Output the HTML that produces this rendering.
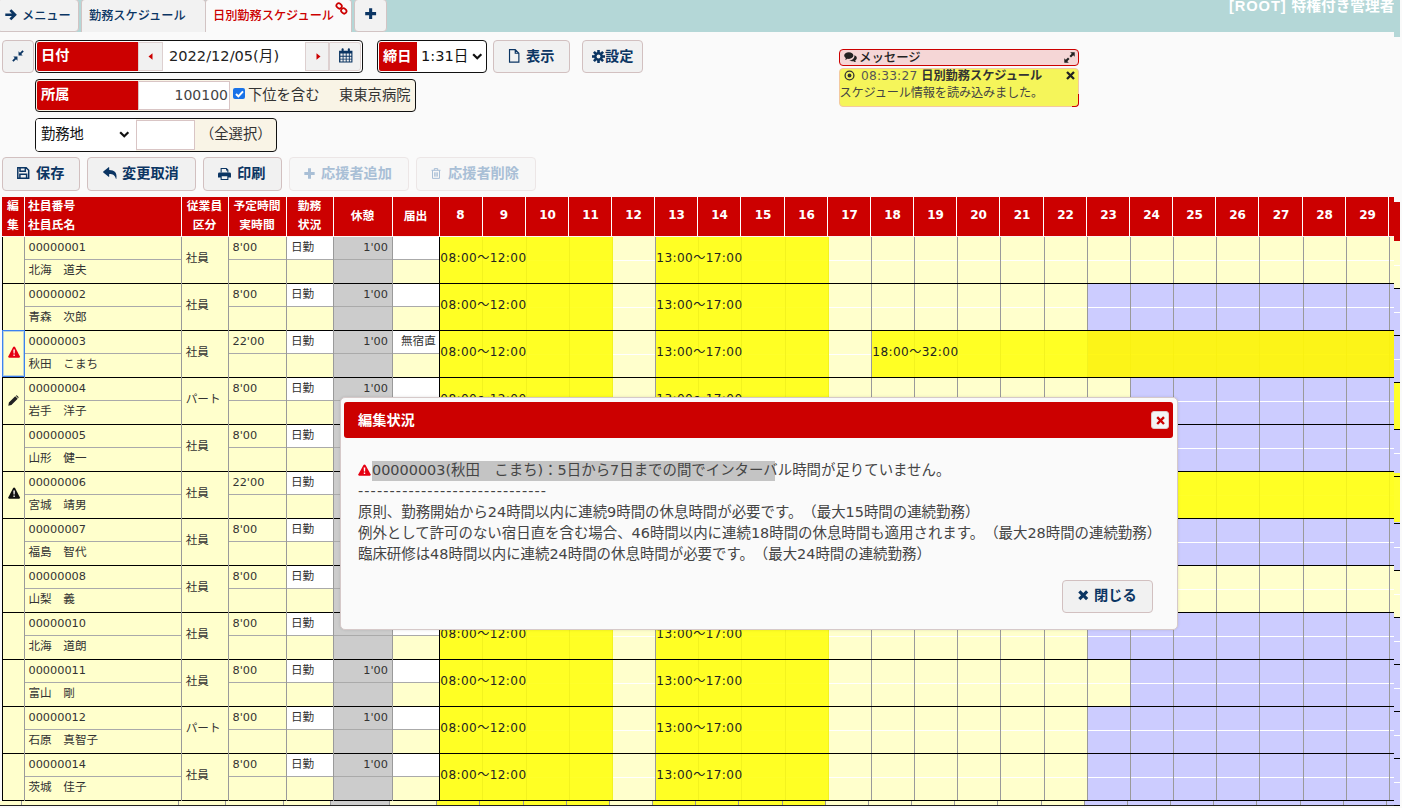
<!DOCTYPE html>
<html lang="ja"><head><meta charset="utf-8"><title>日別勤務スケジュール</title>
<style>
*{box-sizing:border-box;margin:0;padding:0}
html,body{width:1402px;height:808px;overflow:hidden;background:#fafafa}
body{position:relative;text-spacing-trim:space-all;font-family:"DejaVu Sans","Noto Sans CJK JP",sans-serif;font-size:12px;color:#333}
.a{position:absolute}
.t{position:absolute;white-space:nowrap;line-height:1}
.b{font-weight:bold}
.m{font-weight:500}
.nv{color:#0b3563}
.w{color:#fff}
svg{position:absolute;overflow:visible}
.btn{position:absolute;background:#f1f1f1;border:1px solid #d2c0c0;border-radius:4px}
.grp{position:absolute;border:1px solid #111;border-radius:4px;background:#fff}
.red{position:absolute;background:#cc0000}
.tab{position:absolute;top:-1px;height:32.5px;background:#f2f2f2;border:1px solid #d2c4c4;border-radius:4px}
</style></head>
<body>
<div class="a" style="left:0;top:0;width:1394px;height:32px;background:#b4d7d7"></div>
<div class="tab" style="left:-3px;width:82px"></div>
<svg class="a" style="left:5px;top:8.6px" width="11.5" height="11.5" viewBox="0 0 12 12" ><path d="M0.3 6H10M5.6 1.2L10.4 6L5.6 10.8" fill="none" stroke="#0b3563" stroke-width="2.8"/></svg>
<div class="t m nv" style="left:22px;top:10.3px;font-size:12.2px">メニュー</div>
<div class="tab" style="left:81px;width:125px;height:40px;border-bottom:none"></div>
<div class="t m nv" style="left:89px;top:10.3px;font-size:12.2px">勤務スケジュール</div>
<div class="tab" style="left:205px;width:147px;height:40px;background:#fafafa;border-bottom:none"></div>
<div class="a" style="left:204px;top:32px;width:150px;height:8px;background:#fafafa"></div>
<div class="t m" style="left:213px;top:10.3px;font-size:12.2px;color:#cc0000">日別勤務スケジュール</div>
<svg class="a" style="left:335px;top:2px" width="13" height="13" viewBox="0 0 13 13" ><g fill="none" stroke="#cc0000" stroke-width="1.7"><rect x="1.3" y="1.6" width="5.6" height="4.6" rx="2.2" transform="rotate(45 4.1 3.9)"/><rect x="6" y="6.6" width="5.6" height="4.6" rx="2.2" transform="rotate(45 8.8 8.9)"/></g></svg>
<div class="tab" style="left:354px;width:33px"></div>
<svg class="a" style="left:365px;top:8px" width="11.3" height="11.3" viewBox="0 0 11 11" ><path d="M5.5 0.2V10.8M0.2 5.5H10.8" stroke="#0b3563" stroke-width="3" fill="none"/></svg>
<div class="a" style="left:0;top:32px;width:82px;height:8px;background:#fafafa"></div>
<div class="a" style="left:352px;top:32px;width:1042px;height:8px;background:#fafafa"></div>
<div class="a" style="left:81px;top:32px;width:124px;height:8px;background:#fafafa"></div>
<div class="t b w" style="left:1229px;top:-1px;font-size:14.7px"><span style="font-family:Liberation Sans,sans-serif;letter-spacing:.9px">[ROOT] </span>特権付き管理者</div>
<div class="btn" style="left:2px;top:40px;width:32px;height:33px"></div>
<svg class="a" style="left:11.8px;top:50px" width="12" height="12" viewBox="0 0 11 11" ><g fill="#0b3563"><path d="M6 5V1.2L7.3 2.5L9.6 0.2L10.8 1.4L8.5 3.7L9.8 5Z"/><path d="M5 6V9.8L3.7 8.5L1.4 10.8L0.2 9.6L2.5 7.3L1.2 6Z"/></g></svg>
<div class="grp" style="left:35px;top:40px;width:328px;height:33px"></div>
<div class="red" style="left:37px;top:42px;width:101px;height:29px;border-radius:2px 0 0 2px"></div>
<div class="t b w" style="left:41px;top:48px;font-size:14.2px">日付</div>
<div class="a" style="left:138px;top:42px;width:25px;height:29px;background:#f1f1f1;border:1px solid #ddd0d0"></div>
<svg class="a" style="left:148px;top:53px" width="5" height="7" viewBox="0 0 5 7" ><path d="M4.5 0.3V6.7L0.5 3.5Z" fill="#cc0000"/></svg>
<div class="t" style="left:169px;top:49px;font-size:14.6px;color:#222">2022/12/05(月)</div>
<div class="a" style="left:305px;top:42px;width:24px;height:29px;background:#f1f1f1;border:1px solid #ddd0d0"></div>
<svg class="a" style="left:316px;top:53px" width="5" height="7" viewBox="0 0 5 7" ><path d="M0.5 0.3V6.7L4.5 3.5Z" fill="#cc0000"/></svg>
<div class="a" style="left:329px;top:42px;width:32px;height:29px;background:#f1f1f1;border:1px solid #ddd0d0;border-radius:0 3px 3px 0"></div>
<svg class="a" style="left:339px;top:48px" width="13.5" height="14.5" viewBox="0 0 12 13" ><g fill="#0b3563"><path d="M0 2.5H12V13H0ZM1.2 5V7H3.2V5ZM4 5V7H6V5ZM6.8 5V7H8.8V5ZM9.6 5V7H11V5ZM1.2 7.8V9.6H3.2V7.8ZM4 7.8V9.6H6V7.8ZM6.8 7.8V9.6H8.8V7.8ZM9.6 7.8V9.6H11V7.8ZM1.2 10.4V12H3.2V10.4ZM4 10.4V12H6V10.4ZM6.8 10.4V12H8.8V10.4ZM9.6 10.4V12H11V10.4Z" fill-rule="evenodd"/><rect x="2.3" y="0.3" width="1.8" height="3.4" rx="0.8"/><rect x="7.9" y="0.3" width="1.8" height="3.4" rx="0.8"/></g></svg>
<div class="grp" style="left:377px;top:40px;width:110px;height:33px"></div>
<div class="red" style="left:379px;top:42px;width:38px;height:29px;border-radius:2px 0 0 2px"></div>
<div class="t b w" style="left:383px;top:49px;font-size:14.2px">締日</div>
<div class="t" style="left:421px;top:49px;font-size:14.6px;color:#111">1:31日</div>
<svg class="a" style="left:472px;top:53px" width="10.5" height="7" viewBox="0 0 9 6" ><path d="M1 1L4.5 4.5L8 1" fill="none" stroke="#111" stroke-width="1.9"/></svg>
<div class="btn" style="left:493px;top:40px;width:77px;height:33px"></div>
<svg class="a" style="left:507.8px;top:49.2px" width="12.4" height="13.8" viewBox="0 0 10 13" ><path d="M0.6 0.6H6L9.4 4V12.4H0.6ZM6 0.6V4H9.4" fill="none" stroke="#0b3563" stroke-width="1.1"/></svg>
<div class="t b nv" style="left:526px;top:49px;font-size:14.2px">表示</div>
<div class="btn" style="left:582px;top:40px;width:61px;height:33px"></div>
<svg class="a" style="left:592px;top:50px" width="13" height="13" viewBox="0 0 13 13" ><g transform="translate(6.5 6.5)" fill="#0b3563"><circle r="4.4"/><rect x="-1.3" y="-6.5" width="2.6" height="13" transform="rotate(0)"/><rect x="-1.3" y="-6.5" width="2.6" height="13" transform="rotate(45)"/><rect x="-1.3" y="-6.5" width="2.6" height="13" transform="rotate(90)"/><rect x="-1.3" y="-6.5" width="2.6" height="13" transform="rotate(135)"/><circle r="1.9" fill="#f1f1f1"/></g></svg>
<div class="t b nv" style="left:605px;top:49px;font-size:14.2px">設定</div>
<div class="grp" style="left:35px;top:79px;width:381px;height:33px;background:#f9f4e6"></div>
<div class="red" style="left:37px;top:81px;width:101px;height:29px;border-radius:2px 0 0 2px"></div>
<div class="t b w" style="left:41px;top:87px;font-size:14.2px">所属</div>
<div class="a" style="left:138px;top:81px;width:92px;height:29px;background:#fff;border:1px solid #d9c5c5"></div>
<div class="t" style="left:130px;width:98px;text-align:right;top:87.5px;font-size:14px;color:#444">100100</div>
<div class="a" style="left:233px;top:87.6px;width:11.5px;height:11.5px;background:#1a73e8;border-radius:2px"></div>
<svg class="a" style="left:234.5px;top:89.5px" width="9" height="8" viewBox="0 0 9 8" ><path d="M1 4L3.4 6.4L8 1.3" fill="none" stroke="#fff" stroke-width="2"/></svg>
<div class="t" style="left:248px;top:88px;font-size:14.3px;color:#333">下位を含む</div>
<div class="t" style="left:339px;top:88px;font-size:14.3px;color:#333">東東京病院</div>
<div class="grp" style="left:35px;top:118px;width:242px;height:34px;background:#f9f4e6"></div>
<div class="a" style="left:36px;top:119px;width:100px;height:32px;background:#fff;border-radius:3px 0 0 3px"></div>
<div class="t" style="left:41px;top:127.3px;font-size:14.3px;color:#111">勤務地</div>
<svg class="a" style="left:119px;top:131px" width="10.5" height="7" viewBox="0 0 9 6" ><path d="M1 1L4.5 4.5L8 1" fill="none" stroke="#111" stroke-width="1.9"/></svg>
<div class="a" style="left:136px;top:120px;width:59px;height:30px;background:#fff;border:1px solid #d9c5c5"></div>
<div class="t" style="left:200px;top:127px;font-size:14.3px;color:#333">（全選択）</div>
<div class="btn" style="left:2px;top:157px;width:78px;height:34px;"></div>
<div class="t b" style="left:36px;top:166.2px;font-size:14.2px;color:#0b3563">保存</div>
<svg class="a" style="left:17px;top:167px" width="12.5" height="12" viewBox="0 0 12.5 12" ><path d="M0.8 0.8H9.2L11.7 3.3V11.2H0.8ZM3 0.8V4.2H8.3V0.8M2.9 11.2V7.2H9.6V11.2" fill="none" stroke="#0b3563" stroke-width="1.5"/></svg>
<div class="btn" style="left:87px;top:157px;width:109px;height:34px;"></div>
<div class="t b" style="left:122px;top:166.2px;font-size:14.2px;color:#0b3563">変更取消</div>
<svg class="a" style="left:103px;top:166.5px" width="14" height="12.5" viewBox="0 0 14 12.5" ><path d="M5.6 0.2Q6.2 -0.2 6.2 0.7V2.9C11.5 2.9 14.2 5.6 13.4 11.6Q13.2 12.6 12.8 11.6C12 8.2 10 7 6.2 7V9.3Q6.2 10.2 5.6 9.8L0.3 5.4Q-0.1 5 0.3 4.6Z" fill="#0b3563"/></svg>
<div class="btn" style="left:203px;top:157px;width:79px;height:34px;"></div>
<div class="t b" style="left:237px;top:166.2px;font-size:14.2px;color:#0b3563">印刷</div>
<svg class="a" style="left:218px;top:168px" width="13" height="12" viewBox="0 0 13 12" ><g fill="#0b3563"><path d="M2.6 0H8.6L10.4 1.8V4.6H9.3V2.4H8V1.1H3.7V4.6H2.6Z"/><path d="M1.4 4.6H11.6Q13 4.6 13 6V9.4H10.4V12H2.6V9.4H0V6Q0 4.6 1.4 4.6ZM3.7 8.2V10.9H9.3V8.2Z" fill-rule="evenodd"/></g></svg>
<div class="btn" style="left:289px;top:157px;width:120px;height:34px;background:#f7f7f7;border-color:#ece6e6;"></div>
<div class="t b" style="left:321px;top:166.2px;font-size:14.2px;color:#a9bfd6">応援者追加</div>
<svg class="a" style="left:304px;top:167.5px" width="11" height="11" viewBox="0 0 10 10" ><path d="M5 0.3V9.7M0.3 5H9.7" stroke="#a9bfd6" stroke-width="2.7" fill="none"/></svg>
<div class="btn" style="left:416px;top:157px;width:120px;height:34px;background:#f7f7f7;border-color:#ece6e6;"></div>
<div class="t b" style="left:448px;top:166.2px;font-size:14.2px;color:#a9bfd6">応援者削除</div>
<svg class="a" style="left:431px;top:168px" width="10" height="11" viewBox="0 0 10 11" ><path d="M0.5 2.3H9.5M3.3 2.3V0.6H6.7V2.3M1.5 2.3V10.4H8.5V2.3M3.7 4.3V8.6M5 4.3V8.6M6.3 4.3V8.6" fill="none" stroke="#a9bfd6" stroke-width="1"/></svg>
<div class="a" style="left:839px;top:49px;width:240px;height:17px;background:#f5d6d6;border:1px solid #cc0000;border-radius:4px"></div>
<svg class="a" style="left:844px;top:52px" width="13" height="11" viewBox="0 0 13 11"><g fill="#222"><path d="M4.8 0.3C7.4 0.3 9.4 1.7 9.4 3.6C9.4 5.5 7.4 6.9 4.8 6.9C4.3 6.9 3.9 6.85 3.5 6.75C2.8 7.4 1.8 7.7 0.9 7.7C1.5 7.2 1.8 6.6 1.8 6C0.8 5.4 0.2 4.55 0.2 3.6C0.2 1.7 2.2 0.3 4.8 0.3Z"/><path d="M10.3 3.3C11.8 3.8 12.8 4.8 12.8 6C12.8 6.95 12.2 7.8 11.2 8.4C11.2 9 11.5 9.6 12.1 10.1C11.2 10.1 10.2 9.8 9.5 9.15C9.1 9.25 8.7 9.3 8.2 9.3C7 9.3 5.9 9 5.1 8.5C7.9 8.4 10.4 6.6 10.4 3.9C10.4 3.7 10.35 3.5 10.3 3.3Z"/></g></svg>
<div class="t" style="left:859px;top:51.5px;font-size:12.4px;font-weight:500;color:#222">メッセージ</div>
<svg class="a" style="left:1064px;top:52px" width="11" height="11" viewBox="0 0 11 11"><g fill="#222"><path d="M6.2 0.3H10.7V4.8L9.2 3.3L7 5.5L5.5 4L7.7 1.8Z"/><path d="M4.8 10.7H0.3V6.2L1.8 7.7L4 5.5L5.5 7L3.3 9.2Z"/></g></svg>
<div class="a" style="left:839px;top:68px;width:240px;height:39px;background:#f5f55a;border:1px solid #f3c9a0;border-radius:4px"></div>
<div class="a" style="left:1072px;top:94px;width:7px;height:13px;border-right:1.5px solid #cc0000;border-bottom:1.5px solid #cc0000;border-radius:0 0 4px 0"></div>
<svg class="a" style="left:844px;top:70px" width="11" height="11" viewBox="0 0 11 11"><circle cx="5.5" cy="5.5" r="4.4" fill="none" stroke="#333" stroke-width="1.3"/><circle cx="5.5" cy="5.5" r="1.9" fill="#333"/></svg>
<div class="t" style="left:861px;top:70px;font-size:12.2px;color:#555"><span style="letter-spacing:.2px">08:33:27</span> <span class="b" style="color:#333">日別勤務スケジュール</span></div>
<svg class="a" style="left:1066px;top:71px" width="9" height="9" viewBox="0 0 9 9"><path d="M1 1L8 8M8 1L1 8" stroke="#222" stroke-width="2.3" fill="none"/></svg>
<div class="t" style="left:839.5px;top:87px;font-size:12.2px;letter-spacing:-.16px;color:#444">スケジュール情報を読み込みました。</div>
<div class="red" style="left:2px;top:197px;width:1392px;height:39px"></div>
<div class="a" style="left:2px;top:236px;width:1392px;height:1px;background:#fff3f3"></div>
<div class="a" style="left:24px;top:197px;width:1px;height:39px;background:#fff"></div>
<div class="a" style="left:181px;top:197px;width:1px;height:39px;background:#fff"></div>
<div class="a" style="left:228px;top:197px;width:1px;height:39px;background:#fff"></div>
<div class="a" style="left:286px;top:197px;width:1px;height:39px;background:#fff"></div>
<div class="a" style="left:333px;top:197px;width:1px;height:39px;background:#fff"></div>
<div class="a" style="left:392px;top:197px;width:1px;height:39px;background:#fff"></div>
<div class="a" style="left:439px;top:197px;width:1px;height:39px;background:#fff"></div>
<div class="a" style="left:482px;top:197px;width:1px;height:39px;background:#fff"></div>
<div class="a" style="left:525px;top:197px;width:1px;height:39px;background:#fff"></div>
<div class="a" style="left:568px;top:197px;width:1px;height:39px;background:#fff"></div>
<div class="a" style="left:611px;top:197px;width:1px;height:39px;background:#fff"></div>
<div class="a" style="left:654px;top:197px;width:1px;height:39px;background:#fff"></div>
<div class="a" style="left:697px;top:197px;width:1px;height:39px;background:#fff"></div>
<div class="a" style="left:740px;top:197px;width:1px;height:39px;background:#fff"></div>
<div class="a" style="left:784px;top:197px;width:1px;height:39px;background:#fff"></div>
<div class="a" style="left:827px;top:197px;width:1px;height:39px;background:#fff"></div>
<div class="a" style="left:870px;top:197px;width:1px;height:39px;background:#fff"></div>
<div class="a" style="left:913px;top:197px;width:1px;height:39px;background:#fff"></div>
<div class="a" style="left:956px;top:197px;width:1px;height:39px;background:#fff"></div>
<div class="a" style="left:999px;top:197px;width:1px;height:39px;background:#fff"></div>
<div class="a" style="left:1043px;top:197px;width:1px;height:39px;background:#fff"></div>
<div class="a" style="left:1086px;top:197px;width:1px;height:39px;background:#fff"></div>
<div class="a" style="left:1129px;top:197px;width:1px;height:39px;background:#fff"></div>
<div class="a" style="left:1172px;top:197px;width:1px;height:39px;background:#fff"></div>
<div class="a" style="left:1215px;top:197px;width:1px;height:39px;background:#fff"></div>
<div class="a" style="left:1258px;top:197px;width:1px;height:39px;background:#fff"></div>
<div class="a" style="left:1302px;top:197px;width:1px;height:39px;background:#fff"></div>
<div class="a" style="left:1345px;top:197px;width:1px;height:39px;background:#fff"></div>
<div class="a" style="left:1388px;top:197px;width:1px;height:39px;background:#fff"></div>
<div class="t b w" style="left:7px;top:201.2px;font-size:11.8px;">編</div>
<div class="t b w" style="left:7px;top:220.2px;font-size:11.8px;">集</div>
<div class="t b w" style="left:28px;top:201.2px;font-size:11.8px;">社員番号</div>
<div class="t b w" style="left:28px;top:220.2px;font-size:11.8px;">社員氏名</div>
<div class="t b w" style="left:164.5px;width:80px;text-align:center;top:201.2px;font-size:11.8px;">従業員</div>
<div class="t b w" style="left:164.5px;width:80px;text-align:center;top:220.2px;font-size:11.8px;">区分</div>
<div class="t b w" style="left:217px;width:80px;text-align:center;top:201.2px;font-size:11.8px;">予定時間</div>
<div class="t b w" style="left:217px;width:80px;text-align:center;top:220.2px;font-size:11.8px;">実時間</div>
<div class="t b w" style="left:269.5px;width:80px;text-align:center;top:201.2px;font-size:11.8px;">勤務</div>
<div class="t b w" style="left:269.5px;width:80px;text-align:center;top:220.2px;font-size:11.8px;">状況</div>
<div class="t b w" style="left:322.5px;width:80px;text-align:center;top:211px;font-size:11.8px;">休憩</div>
<div class="t b w" style="left:375.5px;width:80px;text-align:center;top:211px;font-size:11.8px;">届出</div>
<div class="t b w" style="left:440.5px;width:40px;text-align:center;top:209px;font-size:12px">8</div>
<div class="t b w" style="left:484.0px;width:40px;text-align:center;top:209px;font-size:12px">9</div>
<div class="t b w" style="left:527.5px;width:40px;text-align:center;top:209px;font-size:12px">10</div>
<div class="t b w" style="left:570.5px;width:40px;text-align:center;top:209px;font-size:12px">11</div>
<div class="t b w" style="left:613.5px;width:40px;text-align:center;top:209px;font-size:12px">12</div>
<div class="t b w" style="left:656.5px;width:40px;text-align:center;top:209px;font-size:12px">13</div>
<div class="t b w" style="left:699.5px;width:40px;text-align:center;top:209px;font-size:12px">14</div>
<div class="t b w" style="left:743.0px;width:40px;text-align:center;top:209px;font-size:12px">15</div>
<div class="t b w" style="left:786.5px;width:40px;text-align:center;top:209px;font-size:12px">16</div>
<div class="t b w" style="left:829.5px;width:40px;text-align:center;top:209px;font-size:12px">17</div>
<div class="t b w" style="left:872.5px;width:40px;text-align:center;top:209px;font-size:12px">18</div>
<div class="t b w" style="left:915.5px;width:40px;text-align:center;top:209px;font-size:12px">19</div>
<div class="t b w" style="left:958.5px;width:40px;text-align:center;top:209px;font-size:12px">20</div>
<div class="t b w" style="left:1002.0px;width:40px;text-align:center;top:209px;font-size:12px">21</div>
<div class="t b w" style="left:1045.5px;width:40px;text-align:center;top:209px;font-size:12px">22</div>
<div class="t b w" style="left:1088.5px;width:40px;text-align:center;top:209px;font-size:12px">23</div>
<div class="t b w" style="left:1131.5px;width:40px;text-align:center;top:209px;font-size:12px">24</div>
<div class="t b w" style="left:1174.5px;width:40px;text-align:center;top:209px;font-size:12px">25</div>
<div class="t b w" style="left:1217.5px;width:40px;text-align:center;top:209px;font-size:12px">26</div>
<div class="t b w" style="left:1261.0px;width:40px;text-align:center;top:209px;font-size:12px">27</div>
<div class="t b w" style="left:1304.5px;width:40px;text-align:center;top:209px;font-size:12px">28</div>
<div class="t b w" style="left:1347.5px;width:40px;text-align:center;top:209px;font-size:12px">29</div>
<div class="a" style="left:3px;top:237px;width:436px;height:46px;background:#ffffcc"></div>
<div class="a" style="left:287px;top:237px;width:46px;height:22px;background:#fff"></div>
<div class="a" style="left:393px;top:237px;width:46px;height:22px;background:#fff"></div>
<div class="a" style="left:334px;top:237px;width:58px;height:46px;background:#cccccc"></div>
<div class="a" style="left:25px;top:259px;width:156px;height:1px;background:#aaa"></div>
<div class="a" style="left:229px;top:259px;width:210px;height:1px;background:#aaa"></div>
<div class="a" style="left:440px;top:237px;width:954px;height:46px;background:#ffffcc"></div>
<div class="a" style="left:440px;top:260px;width:954px;height:1px;background:#fff"></div>
<div class="a" style="left:3px;top:284px;width:436px;height:46px;background:#ffffcc"></div>
<div class="a" style="left:287px;top:284px;width:46px;height:22px;background:#fff"></div>
<div class="a" style="left:393px;top:284px;width:46px;height:22px;background:#fff"></div>
<div class="a" style="left:334px;top:284px;width:58px;height:46px;background:#cccccc"></div>
<div class="a" style="left:25px;top:306px;width:156px;height:1px;background:#aaa"></div>
<div class="a" style="left:229px;top:306px;width:210px;height:1px;background:#aaa"></div>
<div class="a" style="left:440px;top:284px;width:954px;height:46px;background:#ffffcc"></div>
<div class="a" style="left:1088px;top:284px;width:306px;height:46px;background:#ccccff"></div>
<div class="a" style="left:440px;top:307px;width:954px;height:1px;background:#fff"></div>
<div class="a" style="left:3px;top:331px;width:436px;height:46px;background:#ffffcc"></div>
<div class="a" style="left:287px;top:331px;width:46px;height:22px;background:#fff"></div>
<div class="a" style="left:393px;top:331px;width:46px;height:22px;background:#fff"></div>
<div class="a" style="left:334px;top:331px;width:58px;height:46px;background:#cccccc"></div>
<div class="a" style="left:25px;top:353px;width:156px;height:1px;background:#aaa"></div>
<div class="a" style="left:229px;top:353px;width:210px;height:1px;background:#aaa"></div>
<div class="a" style="left:440px;top:331px;width:954px;height:46px;background:#ffffcc"></div>
<div class="a" style="left:1088px;top:331px;width:306px;height:46px;background:#ccccff"></div>
<div class="a" style="left:440px;top:354px;width:954px;height:1px;background:#fff"></div>
<div class="a" style="left:3px;top:378px;width:436px;height:46px;background:#ffffcc"></div>
<div class="a" style="left:287px;top:378px;width:46px;height:22px;background:#fff"></div>
<div class="a" style="left:393px;top:378px;width:46px;height:22px;background:#fff"></div>
<div class="a" style="left:334px;top:378px;width:58px;height:46px;background:#cccccc"></div>
<div class="a" style="left:25px;top:400px;width:156px;height:1px;background:#aaa"></div>
<div class="a" style="left:229px;top:400px;width:210px;height:1px;background:#aaa"></div>
<div class="a" style="left:440px;top:378px;width:954px;height:46px;background:#ffffcc"></div>
<div class="a" style="left:1131px;top:378px;width:263px;height:46px;background:#ccccff"></div>
<div class="a" style="left:440px;top:401px;width:954px;height:1px;background:#fff"></div>
<div class="a" style="left:3px;top:425px;width:436px;height:46px;background:#ffffcc"></div>
<div class="a" style="left:287px;top:425px;width:46px;height:22px;background:#fff"></div>
<div class="a" style="left:393px;top:425px;width:46px;height:22px;background:#fff"></div>
<div class="a" style="left:334px;top:425px;width:58px;height:46px;background:#cccccc"></div>
<div class="a" style="left:25px;top:447px;width:156px;height:1px;background:#aaa"></div>
<div class="a" style="left:229px;top:447px;width:210px;height:1px;background:#aaa"></div>
<div class="a" style="left:440px;top:425px;width:954px;height:46px;background:#ffffcc"></div>
<div class="a" style="left:1131px;top:425px;width:263px;height:46px;background:#ccccff"></div>
<div class="a" style="left:440px;top:448px;width:954px;height:1px;background:#fff"></div>
<div class="a" style="left:3px;top:472px;width:436px;height:46px;background:#ffffcc"></div>
<div class="a" style="left:287px;top:472px;width:46px;height:22px;background:#fff"></div>
<div class="a" style="left:393px;top:472px;width:46px;height:22px;background:#fff"></div>
<div class="a" style="left:334px;top:472px;width:58px;height:46px;background:#cccccc"></div>
<div class="a" style="left:25px;top:494px;width:156px;height:1px;background:#aaa"></div>
<div class="a" style="left:229px;top:494px;width:210px;height:1px;background:#aaa"></div>
<div class="a" style="left:440px;top:472px;width:954px;height:46px;background:#ffffcc"></div>
<div class="a" style="left:440px;top:495px;width:954px;height:1px;background:#fff"></div>
<div class="a" style="left:3px;top:519px;width:436px;height:46px;background:#ffffcc"></div>
<div class="a" style="left:287px;top:519px;width:46px;height:22px;background:#fff"></div>
<div class="a" style="left:393px;top:519px;width:46px;height:22px;background:#fff"></div>
<div class="a" style="left:334px;top:519px;width:58px;height:46px;background:#cccccc"></div>
<div class="a" style="left:25px;top:541px;width:156px;height:1px;background:#aaa"></div>
<div class="a" style="left:229px;top:541px;width:210px;height:1px;background:#aaa"></div>
<div class="a" style="left:440px;top:519px;width:954px;height:46px;background:#ffffcc"></div>
<div class="a" style="left:1088px;top:519px;width:306px;height:46px;background:#ccccff"></div>
<div class="a" style="left:440px;top:542px;width:954px;height:1px;background:#fff"></div>
<div class="a" style="left:3px;top:566px;width:436px;height:46px;background:#ffffcc"></div>
<div class="a" style="left:287px;top:566px;width:46px;height:22px;background:#fff"></div>
<div class="a" style="left:393px;top:566px;width:46px;height:22px;background:#fff"></div>
<div class="a" style="left:334px;top:566px;width:58px;height:46px;background:#cccccc"></div>
<div class="a" style="left:25px;top:588px;width:156px;height:1px;background:#aaa"></div>
<div class="a" style="left:229px;top:588px;width:210px;height:1px;background:#aaa"></div>
<div class="a" style="left:440px;top:566px;width:954px;height:46px;background:#ffffcc"></div>
<div class="a" style="left:440px;top:589px;width:954px;height:1px;background:#fff"></div>
<div class="a" style="left:3px;top:613px;width:436px;height:46px;background:#ffffcc"></div>
<div class="a" style="left:287px;top:613px;width:46px;height:22px;background:#fff"></div>
<div class="a" style="left:393px;top:613px;width:46px;height:22px;background:#fff"></div>
<div class="a" style="left:334px;top:613px;width:58px;height:46px;background:#cccccc"></div>
<div class="a" style="left:25px;top:635px;width:156px;height:1px;background:#aaa"></div>
<div class="a" style="left:229px;top:635px;width:210px;height:1px;background:#aaa"></div>
<div class="a" style="left:440px;top:613px;width:954px;height:46px;background:#ffffcc"></div>
<div class="a" style="left:1088px;top:613px;width:306px;height:46px;background:#ccccff"></div>
<div class="a" style="left:440px;top:636px;width:954px;height:1px;background:#fff"></div>
<div class="a" style="left:3px;top:660px;width:436px;height:46px;background:#ffffcc"></div>
<div class="a" style="left:287px;top:660px;width:46px;height:22px;background:#fff"></div>
<div class="a" style="left:393px;top:660px;width:46px;height:22px;background:#fff"></div>
<div class="a" style="left:334px;top:660px;width:58px;height:46px;background:#cccccc"></div>
<div class="a" style="left:25px;top:682px;width:156px;height:1px;background:#aaa"></div>
<div class="a" style="left:229px;top:682px;width:210px;height:1px;background:#aaa"></div>
<div class="a" style="left:440px;top:660px;width:954px;height:46px;background:#ffffcc"></div>
<div class="a" style="left:1131px;top:660px;width:263px;height:46px;background:#ccccff"></div>
<div class="a" style="left:440px;top:683px;width:954px;height:1px;background:#fff"></div>
<div class="a" style="left:3px;top:707px;width:436px;height:46px;background:#ffffcc"></div>
<div class="a" style="left:287px;top:707px;width:46px;height:22px;background:#fff"></div>
<div class="a" style="left:393px;top:707px;width:46px;height:22px;background:#fff"></div>
<div class="a" style="left:334px;top:707px;width:58px;height:46px;background:#cccccc"></div>
<div class="a" style="left:25px;top:729px;width:156px;height:1px;background:#aaa"></div>
<div class="a" style="left:229px;top:729px;width:210px;height:1px;background:#aaa"></div>
<div class="a" style="left:440px;top:707px;width:954px;height:46px;background:#ffffcc"></div>
<div class="a" style="left:1088px;top:707px;width:306px;height:46px;background:#ccccff"></div>
<div class="a" style="left:440px;top:730px;width:954px;height:1px;background:#fff"></div>
<div class="a" style="left:3px;top:754px;width:436px;height:46px;background:#ffffcc"></div>
<div class="a" style="left:287px;top:754px;width:46px;height:22px;background:#fff"></div>
<div class="a" style="left:393px;top:754px;width:46px;height:22px;background:#fff"></div>
<div class="a" style="left:334px;top:754px;width:58px;height:46px;background:#cccccc"></div>
<div class="a" style="left:25px;top:776px;width:156px;height:1px;background:#aaa"></div>
<div class="a" style="left:229px;top:776px;width:210px;height:1px;background:#aaa"></div>
<div class="a" style="left:440px;top:754px;width:954px;height:46px;background:#ffffcc"></div>
<div class="a" style="left:1088px;top:754px;width:306px;height:46px;background:#ccccff"></div>
<div class="a" style="left:440px;top:777px;width:954px;height:1px;background:#fff"></div>
<div class="a" style="left:482px;top:237px;width:1px;height:564px;background:#9a9a9a"></div>
<div class="a" style="left:526px;top:237px;width:1px;height:564px;background:#9a9a9a"></div>
<div class="a" style="left:569px;top:237px;width:1px;height:564px;background:#9a9a9a"></div>
<div class="a" style="left:612px;top:237px;width:1px;height:564px;background:#9a9a9a"></div>
<div class="a" style="left:655px;top:237px;width:1px;height:564px;background:#9a9a9a"></div>
<div class="a" style="left:698px;top:237px;width:1px;height:564px;background:#9a9a9a"></div>
<div class="a" style="left:741px;top:237px;width:1px;height:564px;background:#9a9a9a"></div>
<div class="a" style="left:785px;top:237px;width:1px;height:564px;background:#9a9a9a"></div>
<div class="a" style="left:828px;top:237px;width:1px;height:564px;background:#9a9a9a"></div>
<div class="a" style="left:871px;top:237px;width:1px;height:564px;background:#9a9a9a"></div>
<div class="a" style="left:914px;top:237px;width:1px;height:564px;background:#9a9a9a"></div>
<div class="a" style="left:957px;top:237px;width:1px;height:564px;background:#9a9a9a"></div>
<div class="a" style="left:1000px;top:237px;width:1px;height:564px;background:#9a9a9a"></div>
<div class="a" style="left:1044px;top:237px;width:1px;height:564px;background:#9a9a9a"></div>
<div class="a" style="left:1087px;top:237px;width:1px;height:564px;background:#9a9a9a"></div>
<div class="a" style="left:1130px;top:237px;width:1px;height:564px;background:#9a9a9a"></div>
<div class="a" style="left:1173px;top:237px;width:1px;height:564px;background:#9a9a9a"></div>
<div class="a" style="left:1216px;top:237px;width:1px;height:564px;background:#9a9a9a"></div>
<div class="a" style="left:1259px;top:237px;width:1px;height:564px;background:#9a9a9a"></div>
<div class="a" style="left:1303px;top:237px;width:1px;height:564px;background:#9a9a9a"></div>
<div class="a" style="left:1346px;top:237px;width:1px;height:564px;background:#9a9a9a"></div>
<div class="a" style="left:1389px;top:237px;width:1px;height:564px;background:#9a9a9a"></div>
<div class="a" style="left:440px;top:237px;width:172.7px;height:46px;background:rgba(255,255,12,.88)"></div>
<div class="t" style="left:440.3px;top:251.5px;font-size:12.1px;letter-spacing:.4px;color:#222">08:00～12:00</div>
<div class="a" style="left:656px;top:237px;width:172.7px;height:46px;background:rgba(255,255,12,.88)"></div>
<div class="t" style="left:656.3px;top:251.5px;font-size:12.1px;letter-spacing:.4px;color:#222">13:00～17:00</div>
<div class="a" style="left:2px;top:283px;width:1392px;height:1px;background:#000"></div>
<div class="t" style="left:28.5px;top:241.7px;font-size:11.3px;color:#333;">00000001</div>
<div class="t" style="left:28.5px;top:264.7px;font-size:11.6px;color:#333;">北海　道夫</div>
<div class="t" style="left:185.7px;top:253.3px;font-size:11.6px;color:#333;">社員</div>
<div class="t" style="left:232.5px;top:242px;font-size:11.3px;color:#333;">8'00</div>
<div class="t" style="left:291px;top:241.7px;font-size:11.6px;color:#333;">日勤</div>
<div class="t" style="left:334px;width:54px;text-align:right;top:242px;font-size:11.3px;color:#333;">1'00</div>
<div class="a" style="left:440px;top:284px;width:172.7px;height:46px;background:rgba(255,255,12,.88)"></div>
<div class="t" style="left:440.3px;top:298.5px;font-size:12.1px;letter-spacing:.4px;color:#222">08:00～12:00</div>
<div class="a" style="left:656px;top:284px;width:172.7px;height:46px;background:rgba(255,255,12,.88)"></div>
<div class="t" style="left:656.3px;top:298.5px;font-size:12.1px;letter-spacing:.4px;color:#222">13:00～17:00</div>
<div class="a" style="left:2px;top:330px;width:1392px;height:1px;background:#000"></div>
<div class="t" style="left:28.5px;top:288.7px;font-size:11.3px;color:#333;">00000002</div>
<div class="t" style="left:28.5px;top:311.7px;font-size:11.6px;color:#333;">青森　次郎</div>
<div class="t" style="left:185.7px;top:300.3px;font-size:11.6px;color:#333;">社員</div>
<div class="t" style="left:232.5px;top:289px;font-size:11.3px;color:#333;">8'00</div>
<div class="t" style="left:291px;top:288.7px;font-size:11.6px;color:#333;">日勤</div>
<div class="t" style="left:334px;width:54px;text-align:right;top:289px;font-size:11.3px;color:#333;">1'00</div>
<div class="a" style="left:440px;top:331px;width:172.7px;height:46px;background:rgba(255,255,12,.88)"></div>
<div class="t" style="left:440.3px;top:345.5px;font-size:12.1px;letter-spacing:.4px;color:#222">08:00～12:00</div>
<div class="a" style="left:656px;top:331px;width:172.7px;height:46px;background:rgba(255,255,12,.88)"></div>
<div class="t" style="left:656.3px;top:345.5px;font-size:12.1px;letter-spacing:.4px;color:#222">13:00～17:00</div>
<div class="a" style="left:872px;top:331px;width:216px;height:46px;background:rgba(255,255,12,.88)"></div>
<div class="a" style="left:1088px;top:331px;width:306px;height:46px;background:rgba(255,246,10,.94)"></div>
<div class="t" style="left:872.3px;top:345.5px;font-size:12.1px;letter-spacing:.4px;color:#222">18:00～32:00</div>
<div class="a" style="left:2px;top:377px;width:1392px;height:1px;background:#000"></div>
<div class="t" style="left:28.5px;top:335.7px;font-size:11.3px;color:#333;">00000003</div>
<div class="t" style="left:28.5px;top:358.7px;font-size:11.6px;color:#333;">秋田　こまち</div>
<div class="t" style="left:185.7px;top:347.3px;font-size:11.6px;color:#333;">社員</div>
<div class="t" style="left:232.5px;top:336px;font-size:11.3px;color:#333;">22'00</div>
<div class="t" style="left:291px;top:335.7px;font-size:11.6px;color:#333;">日勤</div>
<div class="t" style="left:334px;width:54px;text-align:right;top:336px;font-size:11.3px;color:#333;">1'00</div>
<div class="t" style="left:401px;top:335.7px;font-size:11.6px;color:#333;">無宿直</div>
<svg class="a" style="left:7.8px;top:346px" width="12.2" height="12" viewBox="0 0 13 12" preserveAspectRatio="none"><path d="M6.5 0.4Q7.1 0.4 7.5 1.1L12.6 10.2Q13.1 11.6 11.8 11.7H1.2Q-0.1 11.6 0.4 10.2L5.5 1.1Q5.9 0.4 6.5 0.4Z" fill="#e60012"/><path d="M5.7 3.6H7.3L7.1 7.6H5.9ZM5.8 8.4H7.2V9.9H5.8Z" fill="#fff"/></svg>
<div class="a" style="left:440px;top:378px;width:172.7px;height:46px;background:rgba(255,255,12,.88)"></div>
<div class="t" style="left:440.3px;top:392.5px;font-size:12.1px;letter-spacing:.4px;color:#222">08:00～12:00</div>
<div class="a" style="left:656px;top:378px;width:172.7px;height:46px;background:rgba(255,255,12,.88)"></div>
<div class="t" style="left:656.3px;top:392.5px;font-size:12.1px;letter-spacing:.4px;color:#222">13:00～17:00</div>
<div class="a" style="left:2px;top:424px;width:1392px;height:1px;background:#000"></div>
<div class="t" style="left:28.5px;top:382.7px;font-size:11.3px;color:#333;">00000004</div>
<div class="t" style="left:28.5px;top:405.7px;font-size:11.6px;color:#333;">岩手　洋子</div>
<div class="t" style="left:185.7px;top:394.3px;font-size:11.6px;color:#333;">パート</div>
<div class="t" style="left:232.5px;top:383px;font-size:11.3px;color:#333;">8'00</div>
<div class="t" style="left:291px;top:382.7px;font-size:11.6px;color:#333;">日勤</div>
<div class="t" style="left:334px;width:54px;text-align:right;top:383px;font-size:11.3px;color:#333;">1'00</div>
<svg class="a" style="left:8px;top:394.5px" width="11" height="11" viewBox="0 0 11 11"><path d="M0.3 10.7L0.9 7.6L7.2 1.3L9.7 3.8L3.4 10.1ZM7.9 0.7Q8.6 0 9.3 0.7L10.3 1.7Q11 2.4 10.3 3.1L10.2 3.2L7.8 0.8Z" fill="#222"/></svg>
<div class="a" style="left:440px;top:425px;width:172.7px;height:46px;background:rgba(255,255,12,.88)"></div>
<div class="t" style="left:440.3px;top:439.5px;font-size:12.1px;letter-spacing:.4px;color:#222">08:00～12:00</div>
<div class="a" style="left:656px;top:425px;width:172.7px;height:46px;background:rgba(255,255,12,.88)"></div>
<div class="t" style="left:656.3px;top:439.5px;font-size:12.1px;letter-spacing:.4px;color:#222">13:00～17:00</div>
<div class="a" style="left:2px;top:471px;width:1392px;height:1px;background:#000"></div>
<div class="t" style="left:28.5px;top:429.7px;font-size:11.3px;color:#333;">00000005</div>
<div class="t" style="left:28.5px;top:452.7px;font-size:11.6px;color:#333;">山形　健一</div>
<div class="t" style="left:185.7px;top:441.3px;font-size:11.6px;color:#333;">社員</div>
<div class="t" style="left:232.5px;top:430px;font-size:11.3px;color:#333;">8'00</div>
<div class="t" style="left:291px;top:429.7px;font-size:11.6px;color:#333;">日勤</div>
<div class="t" style="left:334px;width:54px;text-align:right;top:430px;font-size:11.3px;color:#333;">1'00</div>
<div class="a" style="left:440px;top:472px;width:172.7px;height:46px;background:rgba(255,255,12,.88)"></div>
<div class="t" style="left:440.3px;top:486.5px;font-size:12.1px;letter-spacing:.4px;color:#222">08:00～12:00</div>
<div class="a" style="left:656px;top:472px;width:172.7px;height:46px;background:rgba(255,255,12,.88)"></div>
<div class="t" style="left:656.3px;top:486.5px;font-size:12.1px;letter-spacing:.4px;color:#222">13:00～17:00</div>
<div class="a" style="left:872px;top:472px;width:522.0px;height:46px;background:rgba(255,255,12,.88)"></div>
<div class="t" style="left:872.3px;top:486.5px;font-size:12.1px;letter-spacing:.4px;color:#222">18:00～32:00</div>
<div class="a" style="left:2px;top:518px;width:1392px;height:1px;background:#000"></div>
<div class="t" style="left:28.5px;top:476.7px;font-size:11.3px;color:#333;">00000006</div>
<div class="t" style="left:28.5px;top:499.7px;font-size:11.6px;color:#333;">宮城　靖男</div>
<div class="t" style="left:185.7px;top:488.3px;font-size:11.6px;color:#333;">社員</div>
<div class="t" style="left:232.5px;top:477px;font-size:11.3px;color:#333;">22'00</div>
<div class="t" style="left:291px;top:476.7px;font-size:11.6px;color:#333;">日勤</div>
<div class="t" style="left:334px;width:54px;text-align:right;top:477px;font-size:11.3px;color:#333;">1'00</div>
<svg class="a" style="left:7.8px;top:487px" width="12.2" height="12" viewBox="0 0 13 12" preserveAspectRatio="none"><path d="M6.5 0.4Q7.1 0.4 7.5 1.1L12.6 10.2Q13.1 11.6 11.8 11.7H1.2Q-0.1 11.6 0.4 10.2L5.5 1.1Q5.9 0.4 6.5 0.4Z" fill="#111"/><path d="M5.7 3.6H7.3L7.1 7.6H5.9ZM5.8 8.4H7.2V9.9H5.8Z" fill="#fff"/></svg>
<div class="a" style="left:440px;top:519px;width:172.7px;height:46px;background:rgba(255,255,12,.88)"></div>
<div class="t" style="left:440.3px;top:533.5px;font-size:12.1px;letter-spacing:.4px;color:#222">08:00～12:00</div>
<div class="a" style="left:656px;top:519px;width:172.7px;height:46px;background:rgba(255,255,12,.88)"></div>
<div class="t" style="left:656.3px;top:533.5px;font-size:12.1px;letter-spacing:.4px;color:#222">13:00～17:00</div>
<div class="a" style="left:2px;top:565px;width:1392px;height:1px;background:#000"></div>
<div class="t" style="left:28.5px;top:523.7px;font-size:11.3px;color:#333;">00000007</div>
<div class="t" style="left:28.5px;top:546.7px;font-size:11.6px;color:#333;">福島　智代</div>
<div class="t" style="left:185.7px;top:535.3px;font-size:11.6px;color:#333;">社員</div>
<div class="t" style="left:232.5px;top:524px;font-size:11.3px;color:#333;">8'00</div>
<div class="t" style="left:291px;top:523.7px;font-size:11.6px;color:#333;">日勤</div>
<div class="t" style="left:334px;width:54px;text-align:right;top:524px;font-size:11.3px;color:#333;">1'00</div>
<div class="a" style="left:440px;top:566px;width:172.7px;height:46px;background:rgba(255,255,12,.88)"></div>
<div class="t" style="left:440.3px;top:580.5px;font-size:12.1px;letter-spacing:.4px;color:#222">08:00～12:00</div>
<div class="a" style="left:656px;top:566px;width:172.7px;height:46px;background:rgba(255,255,12,.88)"></div>
<div class="t" style="left:656.3px;top:580.5px;font-size:12.1px;letter-spacing:.4px;color:#222">13:00～17:00</div>
<div class="a" style="left:2px;top:612px;width:1392px;height:1px;background:#000"></div>
<div class="t" style="left:28.5px;top:570.7px;font-size:11.3px;color:#333;">00000008</div>
<div class="t" style="left:28.5px;top:593.7px;font-size:11.6px;color:#333;">山梨　義</div>
<div class="t" style="left:185.7px;top:582.3px;font-size:11.6px;color:#333;">社員</div>
<div class="t" style="left:232.5px;top:571px;font-size:11.3px;color:#333;">8'00</div>
<div class="t" style="left:291px;top:570.7px;font-size:11.6px;color:#333;">日勤</div>
<div class="t" style="left:334px;width:54px;text-align:right;top:571px;font-size:11.3px;color:#333;">1'00</div>
<div class="a" style="left:440px;top:613px;width:172.7px;height:46px;background:rgba(255,255,12,.88)"></div>
<div class="t" style="left:440.3px;top:627.5px;font-size:12.1px;letter-spacing:.4px;color:#222">08:00～12:00</div>
<div class="a" style="left:656px;top:613px;width:172.7px;height:46px;background:rgba(255,255,12,.88)"></div>
<div class="t" style="left:656.3px;top:627.5px;font-size:12.1px;letter-spacing:.4px;color:#222">13:00～17:00</div>
<div class="a" style="left:2px;top:659px;width:1392px;height:1px;background:#000"></div>
<div class="t" style="left:28.5px;top:617.7px;font-size:11.3px;color:#333;">00000010</div>
<div class="t" style="left:28.5px;top:640.7px;font-size:11.6px;color:#333;">北海　道朗</div>
<div class="t" style="left:185.7px;top:629.3px;font-size:11.6px;color:#333;">社員</div>
<div class="t" style="left:232.5px;top:618px;font-size:11.3px;color:#333;">8'00</div>
<div class="t" style="left:291px;top:617.7px;font-size:11.6px;color:#333;">日勤</div>
<div class="t" style="left:334px;width:54px;text-align:right;top:618px;font-size:11.3px;color:#333;">1'00</div>
<div class="a" style="left:440px;top:660px;width:172.7px;height:46px;background:rgba(255,255,12,.88)"></div>
<div class="t" style="left:440.3px;top:674.5px;font-size:12.1px;letter-spacing:.4px;color:#222">08:00～12:00</div>
<div class="a" style="left:656px;top:660px;width:172.7px;height:46px;background:rgba(255,255,12,.88)"></div>
<div class="t" style="left:656.3px;top:674.5px;font-size:12.1px;letter-spacing:.4px;color:#222">13:00～17:00</div>
<div class="a" style="left:2px;top:706px;width:1392px;height:1px;background:#000"></div>
<div class="t" style="left:28.5px;top:664.7px;font-size:11.3px;color:#333;">00000011</div>
<div class="t" style="left:28.5px;top:687.7px;font-size:11.6px;color:#333;">富山　剛</div>
<div class="t" style="left:185.7px;top:676.3px;font-size:11.6px;color:#333;">社員</div>
<div class="t" style="left:232.5px;top:665px;font-size:11.3px;color:#333;">8'00</div>
<div class="t" style="left:291px;top:664.7px;font-size:11.6px;color:#333;">日勤</div>
<div class="t" style="left:334px;width:54px;text-align:right;top:665px;font-size:11.3px;color:#333;">1'00</div>
<div class="a" style="left:440px;top:707px;width:172.7px;height:46px;background:rgba(255,255,12,.88)"></div>
<div class="t" style="left:440.3px;top:721.5px;font-size:12.1px;letter-spacing:.4px;color:#222">08:00～12:00</div>
<div class="a" style="left:656px;top:707px;width:172.7px;height:46px;background:rgba(255,255,12,.88)"></div>
<div class="t" style="left:656.3px;top:721.5px;font-size:12.1px;letter-spacing:.4px;color:#222">13:00～17:00</div>
<div class="a" style="left:2px;top:753px;width:1392px;height:1px;background:#000"></div>
<div class="t" style="left:28.5px;top:711.7px;font-size:11.3px;color:#333;">00000012</div>
<div class="t" style="left:28.5px;top:734.7px;font-size:11.6px;color:#333;">石原　真智子</div>
<div class="t" style="left:185.7px;top:723.3px;font-size:11.6px;color:#333;">パート</div>
<div class="t" style="left:232.5px;top:712px;font-size:11.3px;color:#333;">8'00</div>
<div class="t" style="left:291px;top:711.7px;font-size:11.6px;color:#333;">日勤</div>
<div class="t" style="left:334px;width:54px;text-align:right;top:712px;font-size:11.3px;color:#333;">1'00</div>
<div class="a" style="left:440px;top:754px;width:172.7px;height:46px;background:rgba(255,255,12,.88)"></div>
<div class="t" style="left:440.3px;top:768.5px;font-size:12.1px;letter-spacing:.4px;color:#222">08:00～12:00</div>
<div class="a" style="left:656px;top:754px;width:172.7px;height:46px;background:rgba(255,255,12,.88)"></div>
<div class="t" style="left:656.3px;top:768.5px;font-size:12.1px;letter-spacing:.4px;color:#222">13:00～17:00</div>
<div class="a" style="left:2px;top:800px;width:1392px;height:1px;background:#000"></div>
<div class="t" style="left:28.5px;top:758.7px;font-size:11.3px;color:#333;">00000014</div>
<div class="t" style="left:28.5px;top:781.7px;font-size:11.6px;color:#333;">茨城　佳子</div>
<div class="t" style="left:185.7px;top:770.3px;font-size:11.6px;color:#333;">社員</div>
<div class="t" style="left:232.5px;top:759px;font-size:11.3px;color:#333;">8'00</div>
<div class="t" style="left:291px;top:758.7px;font-size:11.6px;color:#333;">日勤</div>
<div class="t" style="left:334px;width:54px;text-align:right;top:759px;font-size:11.3px;color:#333;">1'00</div>
<div class="a" style="left:24px;top:237px;width:1px;height:564px;background:#9a9a9a"></div>
<div class="a" style="left:181px;top:237px;width:1px;height:564px;background:#9a9a9a"></div>
<div class="a" style="left:228px;top:237px;width:1px;height:564px;background:#9a9a9a"></div>
<div class="a" style="left:286px;top:237px;width:1px;height:564px;background:#9a9a9a"></div>
<div class="a" style="left:333px;top:237px;width:1px;height:564px;background:#9a9a9a"></div>
<div class="a" style="left:392px;top:237px;width:1px;height:564px;background:#9a9a9a"></div>
<div class="a" style="left:2px;top:237px;width:1px;height:564px;background:#000"></div>
<div class="a" style="left:439px;top:237px;width:1px;height:564px;background:#000"></div>
<div class="a" style="left:2px;top:330px;width:23px;height:47px;border:1px solid #3c82f0;box-shadow:inset 0 0 0 1px rgba(60,130,240,.35)"></div>
<div class="a" style="left:1394px;top:0;width:8px;height:808px;background:#fafafa"></div>
<div class="a" style="left:1394px;top:0;width:6px;height:37px;background:#b4d7d7"></div>
<div class="a" style="left:1394px;top:202px;width:6px;height:39px;background:#cc0000"></div>
<div class="a" style="left:1394px;top:241px;width:6px;height:48px;background:#ffffcc"></div>
<div class="a" style="left:1394px;top:289px;width:6px;height:93px;background:#ccccff"></div>
<div class="a" style="left:1394px;top:382px;width:6px;height:47px;background:#ffff2b"></div>
<div class="a" style="left:1394px;top:429px;width:6px;height:44px;background:#ccccff"></div>
<div class="a" style="left:1394px;top:473px;width:6px;height:49px;background:#ffff2b"></div>
<div class="a" style="left:1394px;top:522px;width:6px;height:48px;background:#ccccff"></div>
<div class="a" style="left:1394px;top:570px;width:6px;height:47px;background:#ffffcc"></div>
<div class="a" style="left:1394px;top:617px;width:6px;height:188px;background:#ccccff"></div>
<div class="a" style="left:0;top:801px;width:1394px;height:4px;background:#ffffcc"></div>
<div class="a" style="left:284px;top:801px;width:46px;height:4px;background:#ffffcc"></div>
<div class="a" style="left:331px;top:801px;width:58px;height:4px;background:#cccccc"></div>
<div class="a" style="left:437px;top:801px;width:173px;height:4px;background:#ffff2b"></div>
<div class="a" style="left:653px;top:801px;width:173px;height:4px;background:#ffff2b"></div>
<div class="a" style="left:1085px;top:801px;width:309px;height:4px;background:#ccccff"></div>
<div class="a" style="left:21px;top:801px;width:1px;height:4px;background:#999"></div>
<div class="a" style="left:178px;top:801px;width:1px;height:4px;background:#999"></div>
<div class="a" style="left:225px;top:801px;width:1px;height:4px;background:#999"></div>
<div class="a" style="left:283px;top:801px;width:1px;height:4px;background:#999"></div>
<div class="a" style="left:330px;top:801px;width:1px;height:4px;background:#999"></div>
<div class="a" style="left:389px;top:801px;width:1px;height:4px;background:#999"></div>
<div class="a" style="left:436px;top:801px;width:1px;height:4px;background:#999"></div>
<div class="a" style="left:479px;top:801px;width:1px;height:4px;background:#999"></div>
<div class="a" style="left:523px;top:801px;width:1px;height:4px;background:#999"></div>
<div class="a" style="left:566px;top:801px;width:1px;height:4px;background:#999"></div>
<div class="a" style="left:609px;top:801px;width:1px;height:4px;background:#999"></div>
<div class="a" style="left:652px;top:801px;width:1px;height:4px;background:#999"></div>
<div class="a" style="left:695px;top:801px;width:1px;height:4px;background:#999"></div>
<div class="a" style="left:738px;top:801px;width:1px;height:4px;background:#999"></div>
<div class="a" style="left:782px;top:801px;width:1px;height:4px;background:#999"></div>
<div class="a" style="left:825px;top:801px;width:1px;height:4px;background:#999"></div>
<div class="a" style="left:868px;top:801px;width:1px;height:4px;background:#999"></div>
<div class="a" style="left:911px;top:801px;width:1px;height:4px;background:#999"></div>
<div class="a" style="left:954px;top:801px;width:1px;height:4px;background:#999"></div>
<div class="a" style="left:997px;top:801px;width:1px;height:4px;background:#999"></div>
<div class="a" style="left:1041px;top:801px;width:1px;height:4px;background:#999"></div>
<div class="a" style="left:1084px;top:801px;width:1px;height:4px;background:#999"></div>
<div class="a" style="left:1127px;top:801px;width:1px;height:4px;background:#999"></div>
<div class="a" style="left:1170px;top:801px;width:1px;height:4px;background:#999"></div>
<div class="a" style="left:1213px;top:801px;width:1px;height:4px;background:#999"></div>
<div class="a" style="left:1256px;top:801px;width:1px;height:4px;background:#999"></div>
<div class="a" style="left:1300px;top:801px;width:1px;height:4px;background:#999"></div>
<div class="a" style="left:1343px;top:801px;width:1px;height:4px;background:#999"></div>
<div class="a" style="left:1386px;top:801px;width:1px;height:4px;background:#999"></div>
<div class="a" style="left:0;top:805px;width:1394px;height:1px;background:#222"></div>
<div class="a" style="left:0;top:806px;width:1402px;height:2px;background:#fafafa"></div>
<div class="a" style="left:1394px;top:288px;width:6px;height:1px;background:#000"></div>
<div class="a" style="left:1394px;top:265px;width:6px;height:1px;background:#fff"></div>
<div class="a" style="left:1394px;top:335px;width:6px;height:1px;background:#000"></div>
<div class="a" style="left:1394px;top:312px;width:6px;height:1px;background:#fff"></div>
<div class="a" style="left:1394px;top:382px;width:6px;height:1px;background:#000"></div>
<div class="a" style="left:1394px;top:359px;width:6px;height:1px;background:#fff"></div>
<div class="a" style="left:1394px;top:429px;width:6px;height:1px;background:#000"></div>
<div class="a" style="left:1394px;top:476px;width:6px;height:1px;background:#000"></div>
<div class="a" style="left:1394px;top:453px;width:6px;height:1px;background:#fff"></div>
<div class="a" style="left:1394px;top:523px;width:6px;height:1px;background:#000"></div>
<div class="a" style="left:1394px;top:570px;width:6px;height:1px;background:#000"></div>
<div class="a" style="left:1394px;top:547px;width:6px;height:1px;background:#fff"></div>
<div class="a" style="left:1394px;top:617px;width:6px;height:1px;background:#000"></div>
<div class="a" style="left:1394px;top:594px;width:6px;height:1px;background:#fff"></div>
<div class="a" style="left:1394px;top:664px;width:6px;height:1px;background:#000"></div>
<div class="a" style="left:1394px;top:641px;width:6px;height:1px;background:#fff"></div>
<div class="a" style="left:1394px;top:711px;width:6px;height:1px;background:#000"></div>
<div class="a" style="left:1394px;top:688px;width:6px;height:1px;background:#fff"></div>
<div class="a" style="left:1394px;top:758px;width:6px;height:1px;background:#000"></div>
<div class="a" style="left:1394px;top:735px;width:6px;height:1px;background:#fff"></div>
<div class="a" style="left:1394px;top:805px;width:6px;height:1px;background:#000"></div>
<div class="a" style="left:1394px;top:782px;width:6px;height:1px;background:#fff"></div>
<div class="a" style="left:340px;top:397px;width:838px;height:233px;background:#fafafa;border:1px solid #d6c9c9;border-radius:5px;box-shadow:0 0 3px rgba(0,0,0,.12)"></div>
<div class="red" style="left:344px;top:402px;width:829px;height:36px;border-radius:3px"></div>
<div class="t b w" style="left:358px;top:413px;font-size:14.2px">編集状況</div>
<div class="a" style="left:1151px;top:411px;width:18px;height:18px;background:#f4f4f4;border:1px solid #e0c8c8;border-radius:3px"></div>
<svg class="a" style="left:1155.7px;top:415.7px" width="9.2" height="9.2" viewBox="0 0 10 10"><path d="M1.3 1.3L8.7 8.7M8.7 1.3L1.3 8.7" stroke="#cc0000" stroke-width="2.6" fill="none"/></svg>
<svg class="a" style="left:358px;top:464px" width="13" height="12" viewBox="0 0 13 12"><path d="M6.5 0.4Q7.1 0.4 7.5 1.1L12.6 10.2Q13.1 11.6 11.8 11.7H1.2Q-0.1 11.6 0.4 10.2L5.5 1.1Q5.9 0.4 6.5 0.4Z" fill="#e60012"/><path d="M5.7 3.6H7.3L7.1 7.6H5.9ZM5.8 8.4H7.2V9.9H5.8Z" fill="#fff"/></svg>
<div class="a" style="left:372px;top:461px;width:403px;height:20px;background:#c4c4c4"></div>
<div class="t" id="m1" style="left:372px;top:463px;font-size:14.43px;color:#444;">00000003(秋田　こまち)：5日から7日までの間でインターバル時間が足りていません。</div>
<div class="t" id="m2" style="left:358px;top:484px;font-size:14.43px;color:#444;letter-spacing:1.1px">------------------------------</div>
<div class="t" id="m3" style="left:358px;top:505px;font-size:14.43px;color:#444;">原則、勤務開始から24時間以内に連続9時間の休息時間が必要です。（最大15時間の連続勤務）</div>
<div class="t" id="m4" style="left:358px;top:526px;font-size:14.43px;color:#444;">例外として許可のない宿日直を含む場合、46時間以内に連続18時間の休息時間も適用されます。（最大28時間の連続勤務）</div>
<div class="t" id="m5" style="left:358px;top:547px;font-size:14.43px;color:#444;">臨床研修は48時間以内に連続24時間の休息時間が必要です。（最大24時間の連続勤務）</div>
<div class="btn" style="left:1062px;top:580px;width:91px;height:33px"></div>
<svg class="a" style="left:1077.5px;top:590.3px" width="10.5" height="10.5" viewBox="0 0 10 10"><path d="M1.3 1.3L8.7 8.7M8.7 1.3L1.3 8.7" stroke="#0b3563" stroke-width="3" fill="none"/></svg>
<div class="t b nv" style="left:1094px;top:588.3px;font-size:14.2px">閉じる</div>
</body></html>
